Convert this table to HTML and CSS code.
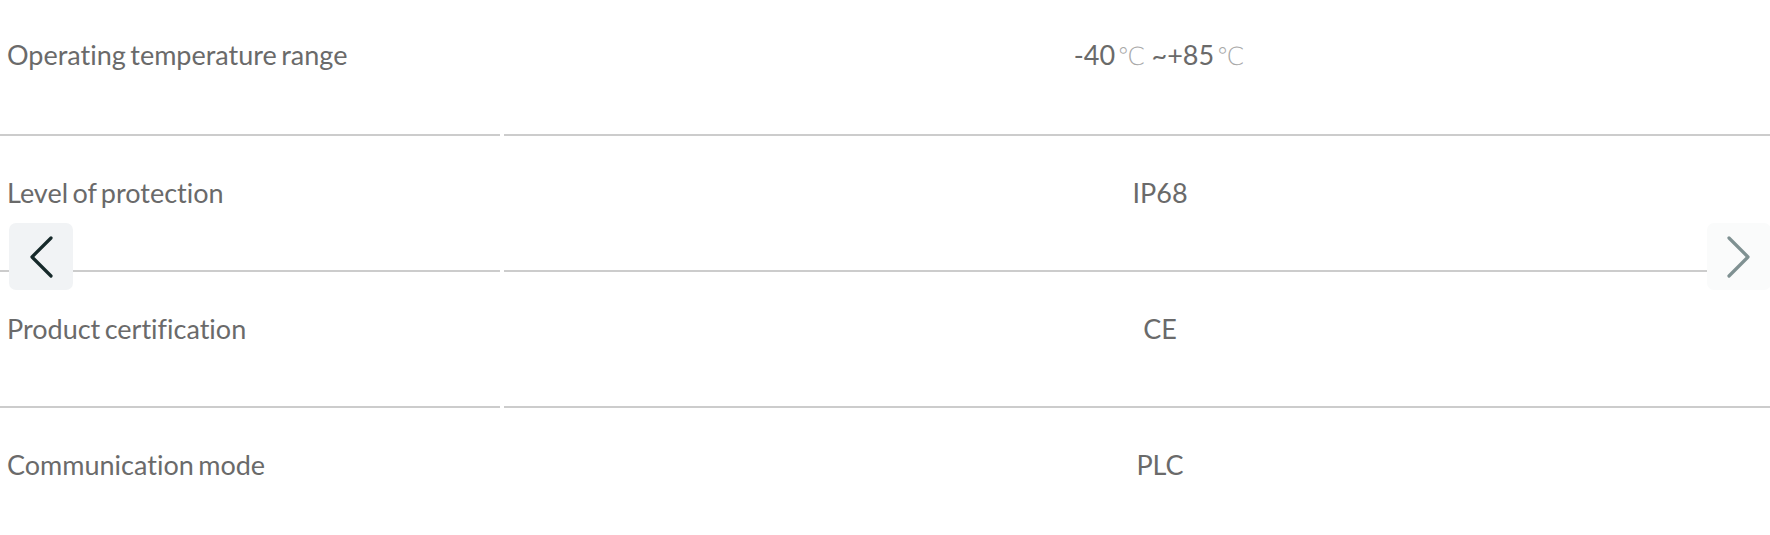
FILE: index.html
```html
<!DOCTYPE html>
<html lang="en">
<head>
<meta charset="utf-8">
<title>Specifications</title>
<link rel="stylesheet" href="styles.css">
</head>
<body>
<div class="viewport">
  <div class="specs">
    <div class="row first">
      <div class="cell name">Operating temperature range</div>
      <div class="cell value">-40<span class="deg">℃</span> ~+85<span class="deg">℃</span></div>
    </div>
    <div class="row">
      <div class="cell name">Level of protection</div>
      <div class="cell value">IP68</div>
    </div>
    <div class="row">
      <div class="cell name">Product certification</div>
      <div class="cell value">CE</div>
    </div>
    <div class="row">
      <div class="cell name">Communication mode</div>
      <div class="cell value">PLC</div>
    </div>
  </div>
  <button class="nav prev" aria-label="Previous">
    <svg width="26" height="42" viewBox="0 0 26 42"><path d="M23 2 L4 21 L23 40" fill="none" stroke="#16292a" stroke-width="3.2" stroke-linecap="round" stroke-linejoin="round"/></svg>
  </button>
  <button class="nav next" aria-label="Next">
    <svg width="26" height="42" viewBox="0 0 26 42"><path d="M3 2 L22 21 L3 40" fill="none" stroke="#7f9192" stroke-width="3.2" stroke-linecap="round" stroke-linejoin="round"/></svg>
  </button>
</div>
</body>
</html>
```

FILE: styles.css
```css
html, body {
  margin: 0;
  padding: 0;
  background: #ffffff;
}

body {
  width: 1770px;
  height: 535px;
  overflow: hidden;
  font-family: "Lato", "Noto Sans", sans-serif;
}

.viewport {
  position: relative;
  width: 1770px;
  height: 535px;
  overflow: hidden;
}

.specs {
  width: 1816px;
  margin-top: -4px;
}

.row {
  display: grid;
  grid-template-columns: 500px 1fr;
  column-gap: 4px;
}

.cell {
  padding: 42px 0 62px;
  line-height: 30px;
  font-size: 27px;
  color: #6a6a6a;
  border-bottom: 2px solid #cccccc;
  word-spacing: -2.5px;
  font-variant-ligatures: none;
}

.row.first .cell {
  border-top: 2px solid #cccccc;
}

.name {
  padding-left: 7px;
}

.value {
  text-align: center;
}

.deg {
  font-family: "DejaVu Sans", sans-serif;
  font-weight: 300;
  color: #a8a8a8;
  font-size: 25px;
  margin: 0 2px;
}

.nav {
  position: absolute;
  top: 223px;
  width: 64px;
  height: 67px;
  border: none;
  border-radius: 7px;
  padding: 0;
  display: flex;
  align-items: center;
  justify-content: center;
  cursor: pointer;
}

.nav.prev {
  left: 9px;
  background: #f1f3f5;
}

.nav.next {
  left: 1707px;
  background: #fafbfb;
}
```
